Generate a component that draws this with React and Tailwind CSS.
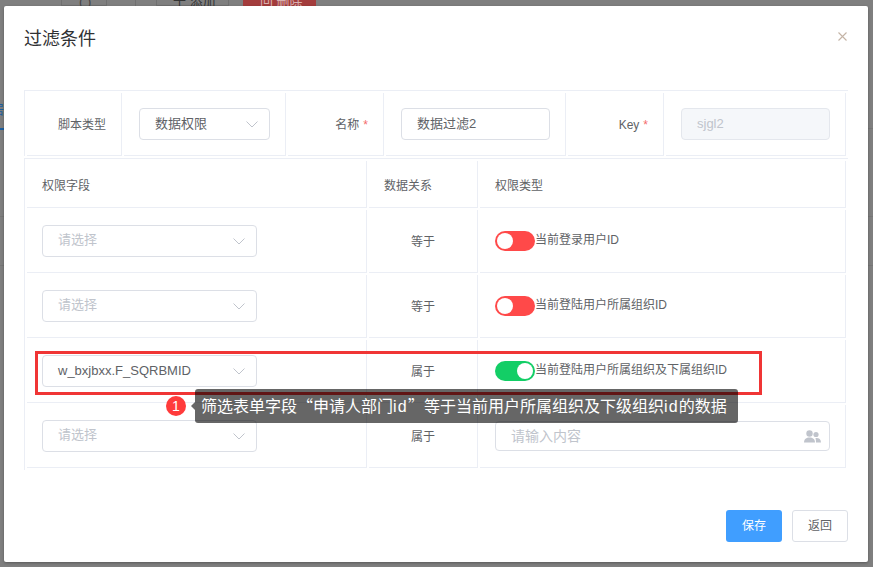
const font = { fontFamily: '"Liberation Sans", "Noto Sans CJK SC", sans-serif' };

const Chevron = () => (
  <svg width="12" height="7" viewBox="0 0 12 7" fill="none" stroke="#c0c4cc" strokeWidth="1" className="shrink-0">
    <path d="M0.5 0.5 L6 6 L11.5 0.5" />
  </svg>
);

const Select = ({ value, placeholder, width = 'w-[215px]' }) => (
  <div className={`${width} h-[32px] flex items-center justify-between pl-[15px] pr-[11px] border border-[#dcdfe6] rounded-[4px] bg-white text-[13px] text-[#606266]`}>
    <span className={value ? '' : '-mt-[2px] text-[#c0c4cc]'}>{value || placeholder}</span>
    <Chevron />
  </div>
);

const Label = ({ children, required }) => (
  <div className="flex items-center justify-end pr-[15px] pt-[2px] text-[12px] text-[#606266] border-r border-b border-[#ebeef5]">
    {children}
    {required && <span className="ml-[4px] text-[#f56c6c]">*</span>}
  </div>
);

const Cell = ({ children, className = '' }) => (
  <div className={`flex items-center border-r border-b border-[#ebeef5] ${className}`}>{children}</div>
);

const Toggle = ({ on }) => (
  <span className={`w-[40px] h-[20px] rounded-full flex items-center px-[2px] shrink-0 ${on ? 'bg-[#13ce66] justify-end' : 'bg-[#ff4949] justify-start'}`}>
    <span className="w-[16px] h-[16px] rounded-full bg-white" />
  </span>
);

const rows = [
  { field: '', relation: '等于', type: '当前登录用户ID', on: false },
  { field: '', relation: '等于', type: '当前登陆用户所属组织ID', on: false },
  { field: 'w_bxjbxx.F_SQRBMID', relation: '属于', type: '当前登陆用户所属组织及下属组织ID', on: true },
  { field: '', relation: '属于', input: true },
];

const cjkQuote = { fontFamily: '"Noto Sans CJK SC", sans-serif' };

const App = () => {
  return (
    <div className="relative w-[873px] h-[567px] overflow-hidden bg-[#7f7f7f] pt-[6px] pl-[4px]" style={font}>
      {/* page behind the mask */}
      <div className="absolute left-0 top-[128px] w-full h-px bg-[#767676]" />
      <div className="absolute left-0 top-[216px] w-full h-px bg-[#767676]" />
      <div className="absolute left-0 top-[265px] w-full h-px bg-[#767676]" />
      <div className="absolute left-[61px] top-[-20px] w-[46px] h-[26px] border border-[#707070]" />
      <div className="absolute left-[79px] top-[-6px] text-[13px] leading-[16px] text-[#444]">( )</div>
      <div className="absolute left-[106px] top-[-20px] w-[30px] h-[26px] border-r border-[#707070]" />
      <div className="absolute left-[156px] top-[-20px] w-[73px] h-[26px] border border-[#707070]" />
      <div className="absolute left-[173px] top-[-6px] text-[13px] leading-[16px] text-[#333]">十 添加</div>
      <div className="absolute left-[243px] top-[-20px] w-[73px] h-[26px] bg-[#a33c3c]" />
      <div className="absolute left-[260px] top-[-6px] text-[13px] leading-[16px] text-[#d9b0b0]">回 删除</div>
      <div className="absolute left-[-9px] top-[102px] text-[13px] leading-[16px] text-[#1c5fa0]">居</div>
      <div className="absolute left-0 top-[128px] w-[4px] h-[2px] bg-[#1c5fa0]" />

      <div className="relative w-[864px] h-[556px] bg-white rounded-[2px] shadow-[0_1px_3px_rgba(0,0,0,0.3)] flex flex-col pt-[21px] px-[20px]">
        <div className="flex items-start justify-between">
          <h2 className="text-[18px] leading-[24px] text-[#303133]">过滤条件</h2>
          <svg width="9" height="9" viewBox="0 0 9 9" fill="none" stroke="#c4b4a6" strokeWidth="1.1" className="mt-[5px] mr-[1px]">
            <path d="M0.5 0.5 L8.5 8.5 M8.5 0.5 L0.5 8.5" />
          </svg>
        </div>

        {/* base form */}
        <div className="mt-[39px] w-[824px] h-[66px] border-t border-l border-[#ebeef5] pt-[2px] pl-[2px] grid grid-cols-[95px_162px_96px_180px_96px_180px] gap-x-[2px] text-[12px] shrink-0">
          <Label>脚本类型</Label>
          <Cell className="pl-[15px]"><Select value="数据权限" width="w-[131px]" /></Cell>
          <Label required>名称</Label>
          <Cell className="pl-[15px]">
            <div className="w-[149px] h-[32px] flex items-center pl-[15px] border border-[#dcdfe6] rounded-[4px] text-[13px] text-[#606266]">数据过滤2</div>
          </Cell>
          <Label required>Key</Label>
          <Cell className="pl-[15px]">
            <div className="w-[149px] h-[32px] flex items-center pl-[15px] border border-[#e4e7ed] rounded-[4px] bg-[#f5f7fa] text-[13px] text-[#c0c4cc]">sjgl2</div>
          </Cell>
        </div>

        {/* permission table */}
        <div className="w-[824px] border-l border-t border-[#ebeef5] mt-[2px] pl-[2px] pt-[2px] pb-[2px] grid grid-cols-[340px_109px_366px] grid-rows-[47px_repeat(4,63px)] gap-[2px] text-[12px] text-[#606266] shrink-0">
          <Cell className="pl-[15px] pt-[3px]">权限字段</Cell>
          <Cell className="pl-[15px] pt-[3px]">数据关系</Cell>
          <Cell className="pl-[15px] pt-[3px]">权限类型</Cell>
          {rows.map((row, i) => (
            <div key={i} className="contents">
              <Cell className="pl-[15px]"><Select value={row.field} placeholder="请选择" /></Cell>
              <Cell className="justify-center pt-[2px]">{row.relation}</Cell>
              <Cell className="pl-[15px]">
                {row.input ? (
                  <div className="w-[335px] h-[30px] flex items-center justify-between pl-[15px] pr-[8px] border border-[#dcdfe6] rounded-[4px] text-[14px] text-[#c0c4cc]">
                    请输入内容
                    <svg width="17" height="13" viewBox="0 0 17 13" fill="#c0c4cc">
                      <circle cx="5.5" cy="3.5" r="3.2" />
                      <path d="M0 12.5c0-3.6 2.4-5 5.5-5s5.5 1.4 5.5 5z" />
                      <circle cx="12" cy="4.5" r="2.6" />
                      <path d="M11.5 8c3.2-.4 5.5 1 5.5 4.5h-5c0-1.8-.2-3.2-.5-4.5z" />
                    </svg>
                  </div>
                ) : (
                  <div className="flex items-center">
                    <Toggle on={row.on} />
                    <span className="-mt-[2px]">{row.type}</span>
                  </div>
                )}
              </Cell>
            </div>
          ))}
        </div>

        <div className="mt-auto mb-[20px] flex justify-end gap-[10px] text-[12px]">
          <button className="w-[56px] h-[32px] rounded-[3px] bg-[#409eff] text-white">保存</button>
          <button className="w-[56px] h-[32px] rounded-[3px] border border-[#dcdfe6] bg-white text-[#606266]">返回</button>
        </div>
      </div>

      {/* annotation */}
      <div className="absolute left-[35px] top-[351px] w-[727px] h-[44px] border-[3px] border-[#f03535]" />
      <div className="absolute left-[166px] top-[389px] flex items-center">
        <span className="w-[20px] h-[20px] rounded-full bg-[#ff3b3b] text-white text-[14px] flex items-center justify-center">1</span>
        <span className="ml-[5px] w-0 h-0 border-y-[4px] border-y-transparent border-r-[4px] border-r-[#686868]" />
        <div className="w-[543px] h-[34px] pl-[6px] rounded-[3px] bg-black/60 text-white text-[16px] leading-[32px] whitespace-nowrap">
          筛选表单字段<span style={cjkQuote}>“</span>申请人部门<span className="tracking-[1.2px]">id</span><span style={cjkQuote}>”</span>等于当前用户所属组织及下级组织<span className="tracking-[1.2px]">id</span>的数据
        </div>
      </div>
    </div>
  );
};

export default App;
